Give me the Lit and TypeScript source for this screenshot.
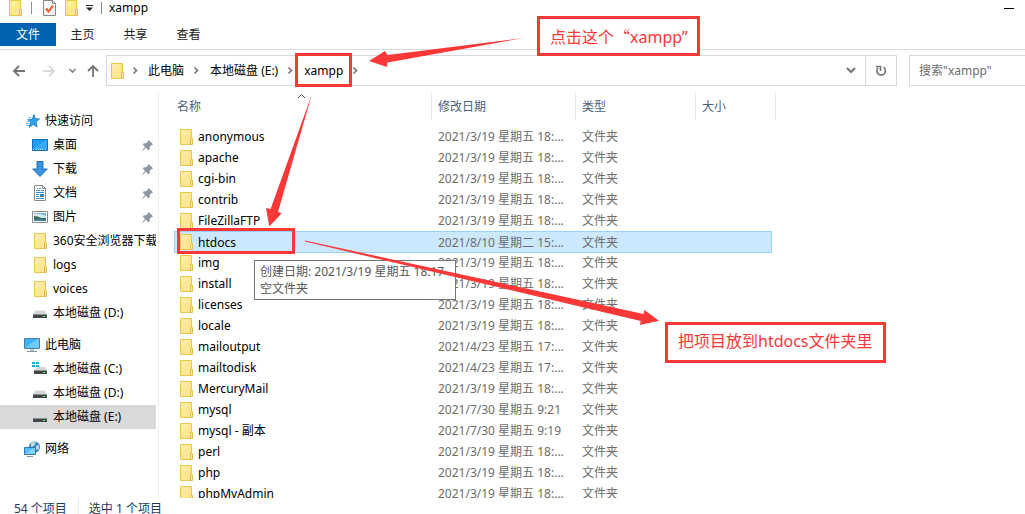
import { LitElement, html, svg, css } from "lit";
import { customElement } from "lit/decorators.js";
import { classMap } from "lit/directives/class-map.js";

const folder = html`<svg class="folder" width="14" height="16" viewBox="0 0 14 16" aria-hidden="true">
  <path d="M.5.5h11v15H.5z" fill="#ffe694" stroke="#e9c64c" />
  <path d="M1 1h9L1 10z" fill="#ffeba6" />
  <path d="M10.500 15.500v-6h2v6z" fill="#ffe694" stroke="#e6c044" />
</svg>`;

const chevron = html`<svg class="chev" width="26" height="9" viewBox="0 0 26 9" aria-hidden="true">
  <path d="M10.500 1.500l3 3-3 3" fill="none" stroke="#777" stroke-width="1.7" />
</svg>`;

const pin = html`<svg class="pin" width="11" height="11" viewBox="0 0 11 11" aria-hidden="true">
  <path d="M6.600 0L11 4.300 9.800 5.300 9.200 5.200 7.700 7 7.700 9.200 6.400 10.200 4 7.800.8 10.700.1 10.200 3.100 6.900.8 4.500 1.800 3.200 4.200 3.200 5.900 1.700 5.700.9z" fill="#8a959f" />
</svg>`;

const driveShape = svg`
  <path d="M3.500 5.500h9L15 9.500H1z" fill="#d4d6d8" />
  <path d="M1 9h14v4H1z" fill="#44484b" />
  <path d="M1 9h14v1H1z" fill="#8b8f92" />
  <path d="M11 11h2v1h-2z" fill="#40e84a" />`;

const icons: Record<string, unknown> = {
  star: svg`<path d="M10 1.500l1.400 4.200 4.100.2-3.500 3.200 1.200 5-3.800-2.600-4.300 2.800 1.500-4.800L4 6.500l4.200-.3z" fill="#2ba3ea" stroke="#1673b8" stroke-width=".8" />
    <path d="M4.500 4.500H7M3 6.500h2M3 8.500h3M2 10.500h3.500M2 12.500h3" stroke="#63bdf0" />`,
  desktop: svg`<path d="M.5 2.500h15v11H.5z" fill="#1e9bf5" stroke="#0f6fc0" /><path d="M1 12L14 3h1v9z" fill="#38acfa" />
    <path d="M1 12.500h2M4 12.500h8M13 12.500h2" stroke="#cfe9fb" stroke-dasharray="1 1" />`,
  download: svg`<path d="M5 .5h6V8h4.300L8 15.500.7 8H5z" fill="#3b93e0" stroke="#2272bd" />`,
  document: svg`<path d="M2.500.5h8l3 3v12h-11z" fill="#fff" stroke="#8c8c8c" /><path d="M10.500.5v3h3" fill="none" stroke="#8c8c8c" />
    <path d="M5 3.500h1M7 3.500h2M4 5.500h4M9 5.500h3M4 7.500h8M4 9.500h3M4 11.500h3M4 13.500h8" stroke="#3a92d2" /><path d="M8 9h4v3H8z" fill="#3f86a8" />`,
  picture: svg`<path d="M.5 2.500h15v11H.5z" fill="#fff" stroke="#8c8c8c" /><path d="M2 4h12v8H2z" fill="#79b8ea" />
    <path d="M2 5q5-1 12 2v2H2z" fill="#d7ecf8" /><path d="M2 7q4 0 7 2h5v1H2z" fill="#37685a" /><path d="M2 10h12v2H2z" fill="#3c7f9e" />`,
  drive: driveShape,
  windrive: svg`<path d="M0 1h3v2H0zM4 1h3v2H4zM0 4h3v2H0zM4 4h3v2H4z" fill="#13aef0" />
    <path d="M5.500 6h7.500l2 3.500H2z" fill="#d4d6d8" /><path d="M2 9h13v4H2z" fill="#44484b" /><path d="M2 9h13v1H2z" fill="#8b8f92" /><path d="M11 11h2v1h-2z" fill="#40e84a" />`,
  computer: svg`<path d="M.5 1.500h15v10H.5z" fill="#3fb2f7" stroke="#4b7f9f" /><path d="M1 11L13 2h2v9z" fill="#6fcbfd" />
    <path d="M6 12h4v2H6z" fill="#b8c4cc" /><path d="M3 14.500h10" stroke="#7b93a3" />`,
  network: svg`<circle cx="10.500" cy="6" r="5.500" fill="#3b82b5" /><path d="M7 2q3-2 5 0l-2 3-3 1zM12 5l3-1v4l-3 1z" fill="#b9dbe9" />
    <path d="M.5 6.500h11v7H.5z" fill="#52bdf8" stroke="#2f76a6" /><path d="M1 13l9-6h1v6z" fill="#80d3fd" /><path d="M3 15.500h6" stroke="#7b93a3" />`,
};

const icon = (name: string) =>
  name === "folder"
    ? html`<span class="icon">${folder}</span>`
    : html`<svg class="icon" width="16" height="16" viewBox="0 0 16 16" aria-hidden="true">${icons[name]}</svg>`;

interface NavItem { icon: string; text: string; pinned?: boolean; selected?: boolean }
interface NavGroup extends NavItem { items: NavItem[] }

const NAV: NavGroup[] = [
  {
    icon: "star", text: "快速访问", items: [
      { icon: "desktop", text: "桌面", pinned: true },
      { icon: "download", text: "下载", pinned: true },
      { icon: "document", text: "文档", pinned: true },
      { icon: "picture", text: "图片", pinned: true },
      { icon: "folder", text: "360安全浏览器下载" },
      { icon: "folder", text: "logs" },
      { icon: "folder", text: "voices" },
      { icon: "drive", text: "本地磁盘 (D:)" },
    ],
  },
  {
    icon: "computer", text: "此电脑", items: [
      { icon: "windrive", text: "本地磁盘 (C:)" },
      { icon: "drive", text: "本地磁盘 (D:)" },
      { icon: "drive", text: "本地磁盘 (E:)", selected: true },
    ],
  },
  { icon: "network", text: "网络", items: [] },
];

const MARCH = "2021/3/19 星期五 18:...";
const APRIL = "2021/4/23 星期五 17:...";
const FILES: [string, string][] = [
  ["anonymous", MARCH], ["apache", MARCH], ["cgi-bin", MARCH], ["contrib", MARCH], ["FileZillaFTP", MARCH],
  ["htdocs", "2021/8/10 星期二 15:..."],
  ["img", MARCH], ["install", MARCH], ["licenses", MARCH], ["locale", MARCH],
  ["mailoutput", APRIL], ["mailtodisk", APRIL], ["MercuryMail", MARCH],
  ["mysql", "2021/7/30 星期五 9:21"], ["mysql - 副本", "2021/7/30 星期五 9:19"],
  ["perl", MARCH], ["php", MARCH], ["phpMyAdmin", MARCH],
];

@customElement("app-root")
export class AppRoot extends LitElement {
  static styles = css`
    :host {
      display: flex; flex-direction: column; position: relative; height: 100vh; overflow: hidden;
      background: #fff; color: #000; font: 12px/20px "Noto Sans", "Noto Sans CJK SC", sans-serif; white-space: nowrap;
    }
    * { box-sizing: border-box; }
    button, input { font: inherit; color: inherit; border: 0; padding: 0; margin: 0; background: none; }
    a { color: inherit; text-decoration: none; }
    svg { display: block; flex: none; }

    .title { display: flex; align-items: center; height: 16px; margin-bottom: 7px; padding: 0 11px 0 9px; }
    .title .rule { width: 1px; height: 12px; background: #8f8f8f; }
    .quick { display: flex; align-items: center; gap: 8px; margin-right: 7px; }
    .quick .doc { margin: 0 1px 0 3px; }
    .quick .folder + svg { margin-left: -1px; }
    .grow { flex: 1; }

    .tabs { display: flex; height: 27px; padding-bottom: 3px; border-bottom: 1px solid #d9dadb; color: #222; }
    .tabs button { width: 53px; }
    .tabs .file { width: 56px; background: #0063b1; color: #fff; }

    .bar { display: flex; align-items: center; padding: 5px 0 7px 12px; }
    .arrows { display: flex; align-items: center; width: 94px; }
    .address { display: flex; align-items: center; flex: 1; height: 31px; border: 1px solid #d9d9d9; padding-left: 4px; }
    .address .slot { width: 37px; display: flex; align-items: center; }
    .address .slot .chev { margin-left: -2px; }
    .address .drop { width: 28px; display: grid; place-items: center; }
    .address .refresh { width: 31px; height: 29px; border-left: 1px solid #d9d9d9; display: grid; place-items: center; }
    .search { width: 116px; height: 31px; margin-left: 12px; border: 1px solid #d9d9d9; border-right: 0; padding-left: 9px; outline: 0; }
    .search::placeholder { color: #6d6d6d; opacity: 1; }

    .body { display: flex; flex: 1; min-height: 0; overflow: hidden; }
    .nav { width: 159px; padding: 16px 2px 0 0; border-right: 1px solid #f0f0f0; overflow: hidden; flex: none; }
    .group { margin-bottom: 8px; }
    .nav a { display: flex; align-items: center; height: 24px; padding-left: 32px; gap: 5px; overflow: hidden; }
    .nav .head { padding-left: 24px; }
    .nav .on { background: #d9d9d9; }
    .nav .label { flex: 1; }
    .icon { width: 16px; height: 16px; flex: none; }
    .nav span.icon { padding-left: 2px; }
    .pin { margin-right: 3px; }

    .list { flex: 1; min-width: 0; padding-left: 15px; overflow: hidden; }
    table, thead, tbody { display: block; }
    table { width: 602px; }
    tr { display: grid; grid-template-columns: 258px 144px 120px 1fr; }
    th { height: 27px; padding: 4px 6px 0; border-right: 1px solid #e5e5e5; text-align: left; font-weight: 400; color: #4c607a; position: relative; }
    th:first-child { padding-left: 3px; }
    .sort { position: absolute; left: 123px; top: 0; }
    tbody { padding: 6px 4px 0 0; }
    td { height: 21px; padding: 0 6px; line-height: 21px; color: #6d6d6d; }
    td.name { display: flex; align-items: center; gap: 4px; color: #000; }
    tr.sel { height: 22px; margin-bottom: -1px; background: #cce8ff; border: solid #99d1ff; border-width: 1px 0; box-shadow: inset 1px 0 #99d1ff, inset -1px 0 #99d1ff; }
    tr.sel td { height: 20px; }

    .status { display: flex; height: 16px; padding-left: 14px; line-height: 22px; color: #1e395b; overflow: hidden; flex: none; }
    .status span + span { border-left: 1px solid #ececec; margin-left: 11px; padding-left: 10px; }

    .tip { position: absolute; left: 254px; top: 260px; width: 202px; padding: 2px 5px; border: 1px solid #767676; background: #fff; color: #575757; line-height: 17px; }
    .arrow-layer { position: absolute; left: 0; top: 0; pointer-events: none; }
    .mark { position: absolute; border: 3px solid #fb3838; pointer-events: none; }
    .note { position: absolute; border: 3px solid #fb3838; background: #fff; color: #fb3838; font-size: 16px; padding-left: 10px; }
    .note.path { left: 537px; top: 16px; width: 163px; height: 40px; line-height: 34px; }
    .note.target { left: 665px; top: 322px; width: 221px; height: 41px; line-height: 32px; }
    .wide { font-family: "Noto Sans CJK SC", sans-serif; }
    .mark.path { left: 295px; top: 53px; width: 57px; height: 34px; }
    .mark.target { left: 177px; top: 228px; width: 118px; height: 26px; }
  `;

  private renderItem(item: NavItem, head = false) {
    return html`<a href="#" class=${classMap({ head, on: !!item.selected })}>
      ${icon(item.icon)}<span class="label">${item.text}</span>${item.pinned ? pin : ""}</a>`;
  }

  render() {
    return html`
      <header class="title">
        <div class="quick">
          ${folder}
          <span class="rule"></span>
          <svg class="doc" width="13" height="16" viewBox="0 0 13 16" aria-hidden="true">
            <path d="M.5.5h9l3 3v12H.5z" fill="#f8f8f8" stroke="#858585" /><path d="M9.500.5v3h3" fill="none" stroke="#858585" />
            <path d="M3 8.500l2.500 3L10 5.500" fill="none" stroke="#e8551c" stroke-width="2" />
          </svg>
          ${folder}
          <svg width="7" height="6" viewBox="0 0 7 6" aria-hidden="true"><path d="M0 0h7v1H0zM0 2.500h7L3.500 6z" fill="#222" /></svg>
          <span class="rule"></span>
        </div>
        <span>xampp</span>
        <span class="grow"></span>
        <button aria-label="最小化"><svg width="10" height="1" viewBox="0 0 10 1"><path d="M0 0h10v1H0z" /></svg></button>
      </header>

      <nav class="tabs">
        <button class="file">文件</button><button>主页</button><button>共享</button><button>查看</button>
      </nav>

      <div class="bar">
        <svg class="arrows" width="94" height="14" viewBox="0 0 94 14" fill="none" stroke-width="1.800" aria-hidden="true">
          <path d="M13 7H2M7 2L2 7l5 5" stroke="#757575" />
          <path d="M31 7h11M37 2l5 5-5 5" stroke="#d9d9d9" />
          <path d="M57.500 5l3 3 3-3" stroke="#808080" stroke-width="1.600" />
          <path d="M81 13V2M76 7l5-5 5 5" stroke="#757575" />
        </svg>
        <div class="address">
          <span class="slot">${folder}${chevron}</span>
          <button>此电脑</button>${chevron}
          <button>本地磁盘 (E:)</button>${chevron}
          <button>xampp</button>${chevron}
          <span class="grow"></span>
          <button class="drop" aria-label="以前的位置"><svg width="10" height="7" viewBox="0 0 10 7"><path d="M1 1l4 4 4-4" fill="none" stroke="#757575" stroke-width="2" /></svg></button>
          <button class="refresh" aria-label="刷新"><svg width="12" height="12" viewBox="0 0 12 12"><path d="M8.500 2.200A4.300 4.300 0 1 1 3 2.900M1 1.500h4.500V6" fill="none" stroke="#757575" stroke-width="1.600" /></svg></button>
        </div>
        <input class="search" type="text" aria-label="搜索" placeholder='搜索"xampp"' />
      </div>

      <div class="body">
        <nav class="nav">
          ${NAV.map((g) => html`<div class="group">${this.renderItem(g, true)}${g.items.map((i) => this.renderItem(i))}</div>`)}
        </nav>
        <main class="list">
          <table>
            <thead>
              <tr>
                <th>名称<svg class="sort" width="9" height="6" viewBox="0 0 9 6" aria-hidden="true"><path d="M1 5l3.500-3.500L8 5" fill="none" stroke="#555" /></svg></th>
                <th>修改日期</th><th>类型</th><th>大小</th>
              </tr>
            </thead>
            <tbody>
              ${FILES.map(([name, date]) => html`<tr class=${classMap({ sel: name === "htdocs" })}>
                <td class="name">${folder}<span>${name}</span></td><td>${date}</td><td>文件夹</td><td></td>
              </tr>`)}
            </tbody>
          </table>
        </main>
      </div>

      <footer class="status"><span>54 个项目</span><span>选中 1 个项目</span></footer>

      <div class="tip" role="tooltip">创建日期: 2021/3/19 星期五 18:17<br />空文件夹</div>
      <div class="note path">点击这个<span class="wide">“</span>xampp”</div>
      <div class="note target">把项目放到htdocs文件夹里</div>
      <div class="mark path"></div>
      <div class="mark target"></div>
      <svg class="arrow-layer" width="700" height="340" viewBox="0 0 700 340" fill="#fb3838" aria-hidden="true">
        <path d="M524 38L387.500 55 385 51 369 61 387 67 387.500 62.500z" />
        <path d="M312 94L270.600 209 266 208 269.300 226.500 281.700 213.300 278 212z" />
        <path d="M305 240.500L643.500 314 644.500 310 659 320.700 640 325 640.700 321 305 241.500z" />
      </svg>
    `;
  }
}
